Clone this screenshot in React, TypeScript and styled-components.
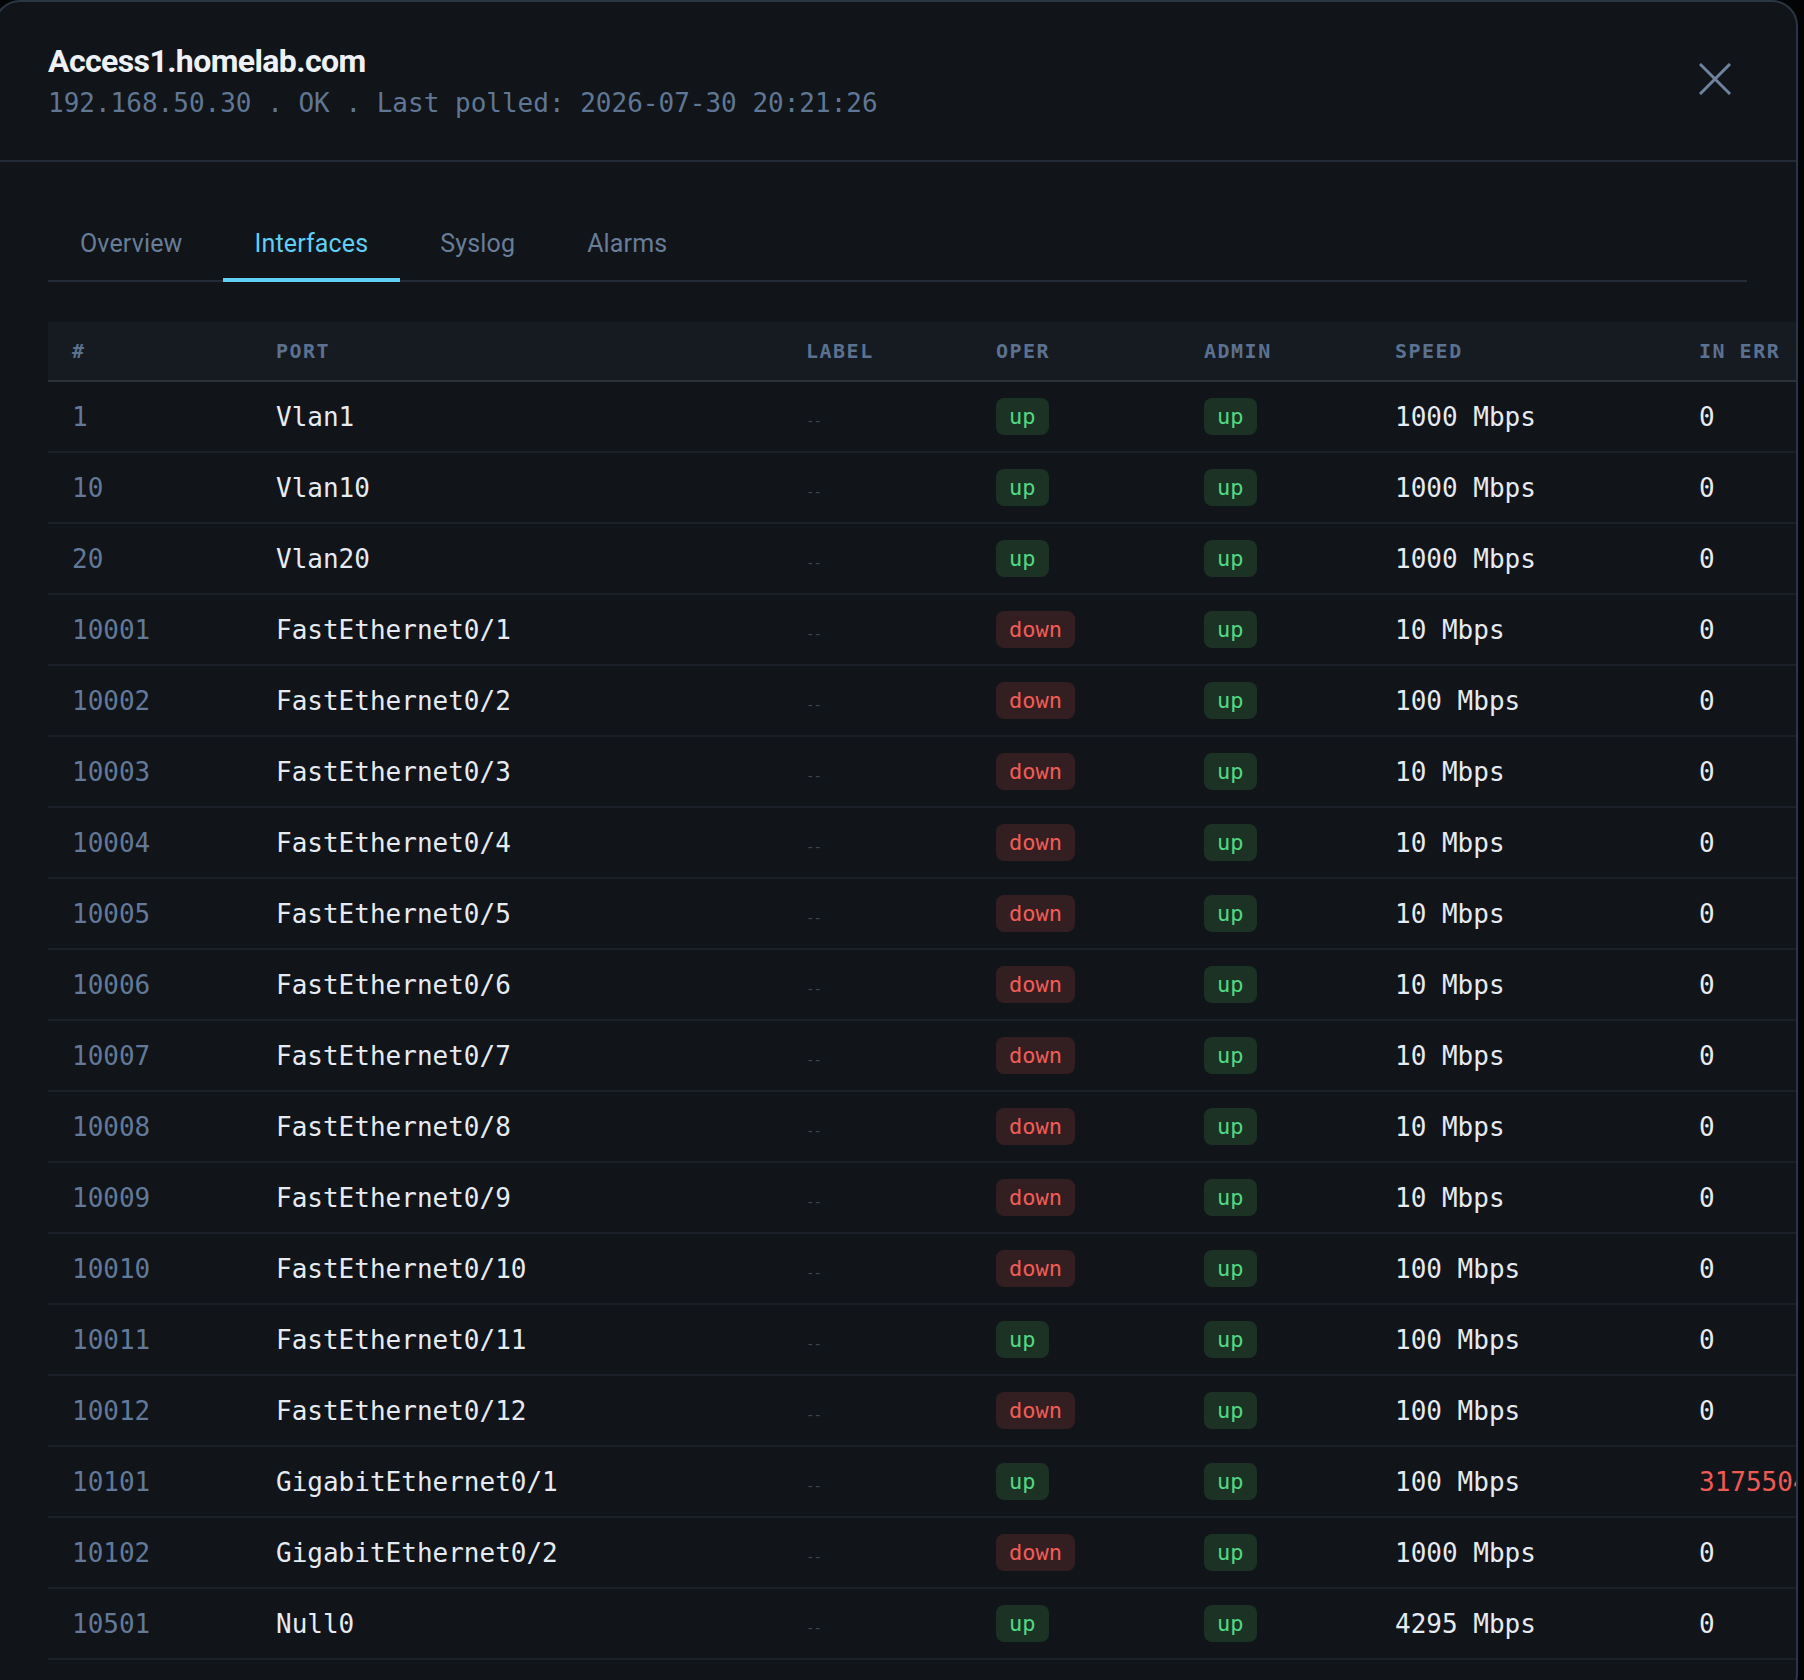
import React from "react";
import styled, { createGlobalStyle } from "styled-components";

const GlobalStyle = createGlobalStyle`
  html, body {
    margin: 0;
    padding: 0;
    background: #030405;
  }
  body {
    font-family: "Roboto", "Liberation Sans", sans-serif;
  }
  * {
    box-sizing: border-box;
  }
`;

const MONO = `"DejaVu Sans Mono", "Liberation Mono", monospace`;

const Page = styled.div`
  width: 1804px;
  height: 1680px;
  overflow: hidden;
  background: #030405;
`;

const Card = styled.div`
  width: 1804px;
  min-height: 1700px;
  margin-left: -6px;
  background: #111419;
  border: 2px solid #2a3646;
  border-radius: 26px;
  overflow: hidden;
`;

const Header = styled.header`
  display: flex;
  justify-content: space-between;
  align-items: flex-start;
  padding: 39px 49px 41px 52px;
  border-bottom: 2px solid #222b37;
`;

const Title = styled.h1`
  margin: 0;
  font-family: "Roboto", "Liberation Sans", sans-serif;
  font-weight: 700;
  font-size: 32px;
  line-height: 40px;
  letter-spacing: -0.6px;
  color: #eef2f8;
`;

const Subtitle = styled.div`
  margin-top: 6px;
  font-family: ${MONO};
  font-size: 26px;
  line-height: 32px;
  color: #5f7794;
  white-space: pre;
`;

const CloseButton = styled.button`
  width: 48px;
  height: 48px;
  margin: 14px 8px 0 0;
  padding: 0;
  border: none;
  background: transparent;
  display: flex;
  align-items: center;
  justify-content: center;
  color: #6d83a0;
  cursor: pointer;
`;

const Body = styled.div`
  padding: 40px 49px 0 52px;
`;

const TabBar = styled.nav`
  display: flex;
  gap: 8px;
  border-bottom: 2px solid #232c38;
`;

const Tab = styled.div<{ $active?: boolean }>`
  height: 80px;
  margin-bottom: -2px;
  padding: 6px 32px 0;
  display: flex;
  align-items: center;
  font-size: 25px;
  letter-spacing: 0.15px;
  color: ${(p) => (p.$active ? "#5fd0f3" : "#677d98")};
  border-bottom: 4px solid ${(p) => (p.$active ? "#5fd0f3" : "transparent")};
`;

const Table = styled.div`
  margin-top: 40px;
  width: 2400px;
  font-family: ${MONO};
`;

const COLS = "204px 530px 190px 208px 191px 304px 260px 260px 253px";

const HeadRow = styled.div`
  display: grid;
  grid-template-columns: ${COLS};
  align-items: center;
  height: 60px;
  background: #161b22;
  border-bottom: 2px solid #28323f;
`;

const HeadCell = styled.div`
  padding: 0 24px;
  font-size: 20px;
  font-weight: 700;
  letter-spacing: 1.5px;
  text-transform: uppercase;
  color: #5b7190;
  white-space: nowrap;
`;

const Row = styled.div`
  display: grid;
  grid-template-columns: ${COLS};
  align-items: center;
  height: 71px;
  border-bottom: 2px solid #1b2028;
`;

const Cell = styled.div<{ $tone?: "muted" | "main" | "alert" }>`
  padding: 0 24px;
  font-size: 26px;
  white-space: nowrap;
  color: ${(p) =>
    p.$tone === "muted" ? "#62799a" : p.$tone === "alert" ? "#ef5a52" : "#e6ebf2"};
`;

const Dash = styled.span`
  font-size: 14px;
  letter-spacing: -1px;
  color: #3e4754;
`;

const Badge = styled.span<{ $up: boolean }>`
  display: inline-block;
  height: 37px;
  line-height: 37px;
  padding: 0 13px;
  border-radius: 8px;
  font-size: 22px;
  font-weight: 500;
  color: ${(p) => (p.$up ? "#52d882" : "#f05c56")};
  background: ${(p) => (p.$up ? "#1b3225" : "#331f21")};
`;

type Iface = {
  idx: number;
  name: string;
  oper: "up" | "down";
  admin: "up" | "down";
  speed: string;
  inErr: string;
  outErr: string;
};

const rows: Iface[] = [
  { idx: 1, name: "Vlan1", oper: "up", admin: "up", speed: "1000 Mbps", inErr: "0", outErr: "0" },
  { idx: 10, name: "Vlan10", oper: "up", admin: "up", speed: "1000 Mbps", inErr: "0", outErr: "0" },
  { idx: 20, name: "Vlan20", oper: "up", admin: "up", speed: "1000 Mbps", inErr: "0", outErr: "0" },
  { idx: 10001, name: "FastEthernet0/1", oper: "down", admin: "up", speed: "10 Mbps", inErr: "0", outErr: "0" },
  { idx: 10002, name: "FastEthernet0/2", oper: "down", admin: "up", speed: "100 Mbps", inErr: "0", outErr: "0" },
  { idx: 10003, name: "FastEthernet0/3", oper: "down", admin: "up", speed: "10 Mbps", inErr: "0", outErr: "0" },
  { idx: 10004, name: "FastEthernet0/4", oper: "down", admin: "up", speed: "10 Mbps", inErr: "0", outErr: "0" },
  { idx: 10005, name: "FastEthernet0/5", oper: "down", admin: "up", speed: "10 Mbps", inErr: "0", outErr: "0" },
  { idx: 10006, name: "FastEthernet0/6", oper: "down", admin: "up", speed: "10 Mbps", inErr: "0", outErr: "0" },
  { idx: 10007, name: "FastEthernet0/7", oper: "down", admin: "up", speed: "10 Mbps", inErr: "0", outErr: "0" },
  { idx: 10008, name: "FastEthernet0/8", oper: "down", admin: "up", speed: "10 Mbps", inErr: "0", outErr: "0" },
  { idx: 10009, name: "FastEthernet0/9", oper: "down", admin: "up", speed: "10 Mbps", inErr: "0", outErr: "0" },
  { idx: 10010, name: "FastEthernet0/10", oper: "down", admin: "up", speed: "100 Mbps", inErr: "0", outErr: "0" },
  { idx: 10011, name: "FastEthernet0/11", oper: "up", admin: "up", speed: "100 Mbps", inErr: "0", outErr: "0" },
  { idx: 10012, name: "FastEthernet0/12", oper: "down", admin: "up", speed: "100 Mbps", inErr: "0", outErr: "0" },
  { idx: 10101, name: "GigabitEthernet0/1", oper: "up", admin: "up", speed: "100 Mbps", inErr: "31755048", outErr: "0" },
  { idx: 10102, name: "GigabitEthernet0/2", oper: "down", admin: "up", speed: "1000 Mbps", inErr: "0", outErr: "0" },
  { idx: 10501, name: "Null0", oper: "up", admin: "up", speed: "4295 Mbps", inErr: "0", outErr: "0" },
];

const tabs = ["Overview", "Interfaces", "Syslog", "Alarms"];
const columns = ["#", "Port", "Label", "Oper", "Admin", "Speed", "In Err", "Out Err", "Last Change"];

export default function App() {
  return (
    <Page>
      <GlobalStyle />
      <Card>
        <Header>
          <div>
            <Title>Access1.homelab.com</Title>
            <Subtitle>192.168.50.30 . OK . Last polled: 2026-07-30 20:21:26</Subtitle>
          </div>
          <CloseButton aria-label="Close">
            <svg width="32" height="32" viewBox="0 0 32 32" fill="none">
              <path d="M2 2 L30 30 M30 2 L2 30" stroke="currentColor" strokeWidth="3" strokeLinecap="square" />
            </svg>
          </CloseButton>
        </Header>
        <Body>
          <TabBar>
            {tabs.map((t) => (
              <Tab key={t} $active={t === "Interfaces"}>
                {t}
              </Tab>
            ))}
          </TabBar>
          <Table>
            <HeadRow>
              {columns.map((c) => (
                <HeadCell key={c}>{c}</HeadCell>
              ))}
            </HeadRow>
            {rows.map((r) => (
              <Row key={r.idx}>
                <Cell $tone="muted">{r.idx}</Cell>
                <Cell>{r.name}</Cell>
                <Cell>
                  <Dash>--</Dash>
                </Cell>
                <Cell>
                  <Badge $up={r.oper === "up"}>{r.oper}</Badge>
                </Cell>
                <Cell>
                  <Badge $up={r.admin === "up"}>{r.admin}</Badge>
                </Cell>
                <Cell>{r.speed}</Cell>
                <Cell $tone={r.inErr !== "0" ? "alert" : undefined}>{r.inErr}</Cell>
                <Cell>{r.outErr}</Cell>
                <Cell $tone="muted">--</Cell>
              </Row>
            ))}
          </Table>
        </Body>
      </Card>
    </Page>
  );
}
